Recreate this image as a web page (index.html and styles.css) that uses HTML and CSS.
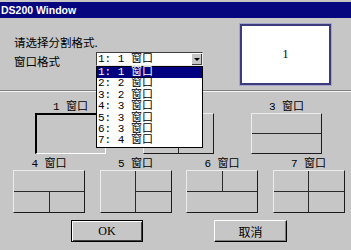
FILE: index.html
```html
<!DOCTYPE html>
<html lang="zh">
<head>
	<meta charset="UTF-8">
	<title>DS200 Window</title>
	<link rel="stylesheet" href="styles.css">
</head>
<body>
	<div class="window">
		<div class="titlebar">DS200 Window</div>
		<div class="head">
			<div class="form">
				<div class="prompt">请选择分割格式.</div>
				<div class="row">
					<div class="label">窗口格式</div>
					<div class="combo">
						<div class="combo-value">1: 1 窗口</div>
						<div class="combo-btn"><span class="arrow"></span></div>
						<ul class="combo-list">
							<li class="on">1: 1 窗口</li>
							<li>2: 2 窗口</li>
							<li>3: 2 窗口</li>
							<li>4: 3 窗口</li>
							<li>5: 3 窗口</li>
							<li>6: 3 窗口</li>
							<li>7: 4 窗口</li>
						</ul>
					</div>
				</div>
			</div>
			<div class="preview">1</div>
		</div>
		<div class="sep"></div>

		<div class="layouts row1">
			<div class="item">
				<div class="name">1 窗口</div>
				<div class="pane selected"><i></i></div>
			</div>
			<div class="item">
				<div class="name">2 窗口</div>
				<div class="pane cols"><i></i><i></i></div>
			</div>
			<div class="item">
				<div class="name">3 窗口</div>
				<div class="pane rows"><i></i><i></i></div>
			</div>
		</div>

		<div class="layouts row2">
			<div class="item">
				<div class="name">4 窗口</div>
				<div class="pane quad top-wide"><i></i><i></i><i></i></div>
			</div>
			<div class="item">
				<div class="name">5 窗口</div>
				<div class="pane quad left-tall"><i></i><i></i><i></i></div>
			</div>
			<div class="item">
				<div class="name">6 窗口</div>
				<div class="pane quad bottom-wide"><i></i><i></i><i></i></div>
			</div>
			<div class="item">
				<div class="name">7 窗口</div>
				<div class="pane quad"><i></i><i></i><i></i><i></i></div>
			</div>
		</div>

		<div class="buttons">
			<div class="btn default">OK</div>
			<div class="btn cancel">取消</div>
		</div>
	</div>
</body>
</html>
```

FILE: styles.css
```css
body {
	margin: 0;
	background: #c6c6c6;
	font-family: "Noto Sans CJK SC", sans-serif;
	color: #000;
}
.window {
	width: 351px;
	height: 250px;
	overflow: hidden;
}
.titlebar {
	margin-top: 2px;
	height: 16px;
	line-height: 16px;
	padding-left: 1px;
	background: #06067e;
	color: #fff;
	font-family: "Liberation Sans", sans-serif;
	font-weight: bold;
	font-size: 10.5px;
}
.head {
	display: flex;
	height: 72px;
}
.form {
	padding-left: 14px;
}
.prompt {
	margin-top: 17px;
	line-height: 14px;
	font-size: 11.5px;
}
.row {
	display: flex;
	margin-top: 3px;
}
.label {
	width: 82px;
	padding-top: 2px;
	line-height: 14px;
	font-size: 11.5px;
}
.combo {
	position: relative;
	display: flex;
	width: 107px;
	height: 14px;
	box-sizing: border-box;
	background: #fff;
	border-top: 1px solid #404040;
	border-left: 1px solid #404040;
	border-right: 1px solid #e8e8e8;
	border-bottom: 1px solid #e8e8e8;
}
.combo-value {
	flex: 1;
	padding-left: 1px;
	line-height: 12px;
	font-family: "Liberation Mono", "Noto Sans CJK SC", monospace;
	font-size: 11px;
	white-space: pre;
}
.combo-btn {
	width: 11px;
	display: flex;
	align-items: center;
	justify-content: center;
	background: #c6c6c6;
	box-shadow: inset 1px 1px #fff, inset -1px -1px #404040;
}
.arrow {
	width: 0;
	height: 0;
	border-left: 3px solid transparent;
	border-right: 3px solid transparent;
	border-top: 3px solid #000;
}
.combo-list {
	position: absolute;
	top: 13px;
	left: -1px;
	width: 107px;
	box-sizing: border-box;
	margin: 0;
	padding: 0;
	list-style: none;
	background: #fff;
	border: 1px solid #000;
	z-index: 2;
}
.combo-list li {
	height: 11.4px;
	line-height: 11.4px;
	padding-left: 1px;
	font-family: "Liberation Mono", "Noto Sans CJK SC", monospace;
	font-size: 11px;
	white-space: pre;
}
.combo-list li.on {
	background: #000080;
	color: #fff;
}
.preview {
	margin: 6px 20px 0 auto;
	width: 91px;
	height: 61px;
	box-sizing: border-box;
	background: #fff;
	border: 2px solid #3c3c7c;
	box-shadow: 0 0 0 1px #a4a4cc;
	display: flex;
	align-items: center;
	justify-content: center;
	font-family: "Liberation Serif", serif;
	font-size: 12px;
}
.sep {
	border-top: 1px solid #808080;
	border-bottom: 1px solid #f4f4f4;
}
.layouts {
	display: flex;
}
.row1 {
	margin-top: 9px;
	padding-left: 35px;
	gap: 37px;
}
.row1 .item {
	width: 71px;
}
.row1 .pane {
	height: 41px;
}
.row2 {
	margin-top: 4px;
	padding-left: 13px;
	gap: 14.5px;
}
.row2 .item {
	width: 72px;
}
.row2 .pane {
	height: 43px;
}
.name {
	height: 12px;
	line-height: 12px;
	text-align: center;
	font-family: "Liberation Mono", "Noto Sans CJK SC", monospace;
	font-size: 11px;
	white-space: pre;
}
.pane {
	display: grid;
	gap: 1px;
	box-sizing: border-box;
	background: #2a2a2a;
	border-top: 1px solid #ececec;
	border-left: 1px solid #ececec;
	border-right: 1px solid #1c1c1c;
	border-bottom: 1px solid #1c1c1c;
}
.pane i {
	display: block;
	background: #c6c6c6;
}
.pane.selected {
	border-top: 2px solid #000;
	border-left: 2px solid #000;
	border-right: 1px solid #fff;
	border-bottom: 1px solid #fff;
}
.pane.cols {
	grid-template-columns: 1fr 1fr;
}
.pane.rows {
	grid-template-rows: 1fr 1fr;
}
.pane.quad {
	grid-template-columns: 1fr 1fr;
	grid-template-rows: 1fr 1fr;
}
.top-wide i:first-child {
	grid-column: span 2;
}
.left-tall i:first-child {
	grid-row: span 2;
}
.bottom-wide i:last-child {
	grid-column: span 2;
}
.buttons {
	display: flex;
	margin-top: 7px;
	padding-left: 71px;
	gap: 71px;
}
.btn {
	width: 72px;
	height: 22px;
	box-sizing: border-box;
	display: flex;
	align-items: center;
	justify-content: center;
	font-size: 12px;
}
.btn.default {
	border: 1px solid #000;
	box-shadow: inset 1px 1px #fff, inset -1px -1px #404040;
	font-family: "Liberation Serif", serif;
}
.btn.cancel {
	width: 73px;
	border-top: 1px solid #fff;
	border-left: 1px solid #fff;
	border-right: 1px solid #000;
	border-bottom: 1px solid #000;
	box-shadow: inset -1px -1px #808080;
}
```
